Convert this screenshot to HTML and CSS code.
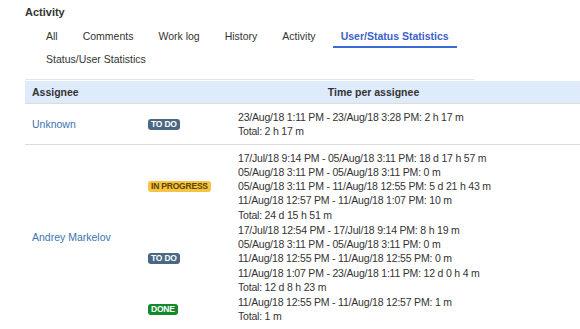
FILE: index.html
```html
<!DOCTYPE html>
<html lang="en">

<head>
    <meta charset="UTF-8">
    <meta name="viewport" content="width=device-width, initial-scale=1.0">
    <title>Activity</title>
    <link rel="stylesheet" href="styles.css">
</head>

<body>
    <section class="activity">
        <h2 class="title">Activity</h2>
        <ul class="tabs">
            <li class="tab">All</li>
            <li class="tab">Comments</li>
            <li class="tab">Work log</li>
            <li class="tab">History</li>
            <li class="tab">Activity</li>
            <li class="tab active">User/Status Statistics</li>
            <li class="tab">Status/User Statistics</li>
        </ul>

        <div class="stats">
            <div class="stats-head">
                <div class="col-assignee">Assignee</div>
                <div class="col-time">Time per assignee</div>
            </div>

            <div class="stats-row">
                <div class="assignee"><a href="#">Unknown</a></div>
                <div class="groups">
                    <div class="group">
                        <div class="status"><span class="lozenge todo">To Do</span></div>
                        <div class="times">
                            <div>23/Aug/18 1:11 PM - 23/Aug/18 3:28 PM: 2 h 17 m</div>
                            <div>Total: 2 h 17 m</div>
                        </div>
                    </div>
                </div>
            </div>

            <div class="stats-row">
                <div class="assignee"><a href="#">Andrey Markelov</a></div>
                <div class="groups">
                    <div class="group">
                        <div class="status"><span class="lozenge progress">In Progress</span></div>
                        <div class="times">
                            <div>17/Jul/18 9:14 PM - 05/Aug/18 3:11 PM: 18 d 17 h 57 m</div>
                            <div>05/Aug/18 3:11 PM - 05/Aug/18 3:11 PM: 0 m</div>
                            <div>05/Aug/18 3:11 PM - 11/Aug/18 12:55 PM: 5 d 21 h 43 m</div>
                            <div>11/Aug/18 12:57 PM - 11/Aug/18 1:07 PM: 10 m</div>
                            <div>Total: 24 d 15 h 51 m</div>
                        </div>
                    </div>
                    <div class="group">
                        <div class="status"><span class="lozenge todo">To Do</span></div>
                        <div class="times">
                            <div>17/Jul/18 12:54 PM - 17/Jul/18 9:14 PM: 8 h 19 m</div>
                            <div>05/Aug/18 3:11 PM - 05/Aug/18 3:11 PM: 0 m</div>
                            <div>11/Aug/18 12:55 PM - 11/Aug/18 12:55 PM: 0 m</div>
                            <div>11/Aug/18 1:07 PM - 23/Aug/18 1:11 PM: 12 d 0 h 4 m</div>
                            <div>Total: 12 d 8 h 23 m</div>
                        </div>
                    </div>
                    <div class="group">
                        <div class="status"><span class="lozenge done">Done</span></div>
                        <div class="times">
                            <div>11/Aug/18 12:55 PM - 11/Aug/18 12:57 PM: 1 m</div>
                            <div>Total: 1 m</div>
                        </div>
                    </div>
                </div>
            </div>
        </div>
    </section>
</body>

</html>
```

FILE: styles.css
```css
* {
    margin: 0;
    padding: 0;
    box-sizing: border-box;
}

body {
    background-color: #fff;
    font-family: "Liberation Sans", Arial, sans-serif;
    font-size: 10.5px;
    color: #333;
    overflow: hidden;
}

.activity {
    padding-left: 25px;
}

.title {
    font-size: 11px;
    font-weight: bold;
    line-height: 14px;
    padding-top: 5px;
}

.tabs {
    list-style: none;
    display: flex;
    flex-wrap: wrap;
    width: 450px;
    margin-top: 6px;
    padding-left: 13px;
    padding-bottom: 8px;
    border-bottom: 1px solid #e6e6e6;
}

.tab {
    padding: 5px 8px 3px;
    margin-right: 9px;
    line-height: 13px;
    border-bottom: 2px solid transparent;
    color: #333;
}

.tab.active {
    font-weight: bold;
    color: #3d5fc6;
    border-bottom-color: #3b6ad6;
}

.stats {
    margin-top: 1px;
    width: 570px;
}

.stats-head {
    display: flex;
    background-color: #deebfb;
    border-bottom: 1px solid #dcdcdc;
    font-weight: bold;
    line-height: 22px;
}

.col-assignee {
    width: 115px;
    padding-left: 7px;
}

.col-time {
    flex: 1;
    text-align: center;
    padding-left: 12px;
}

.stats-row {
    display: flex;
    border-bottom: 1px solid #dcdcdc;
    padding: 6px 0 5px;
}

.assignee {
    width: 115px;
    padding-left: 7px;
    display: flex;
    align-items: center;
}

.assignee a {
    color: #3b73af;
    text-decoration: none;
}

.groups {
    flex: 1;
    display: flex;
    flex-direction: column;
    gap: 1px;
}

.group {
    display: flex;
}

.status {
    width: 90px;
    padding-left: 8px;
    display: flex;
    align-items: center;
}

.times {
    flex: 1;
    padding-left: 8px;
    line-height: 14.25px;
    letter-spacing: -0.2px;
}

.lozenge {
    display: inline-block;
    font-size: 8.5px;
    font-weight: bold;
    text-transform: uppercase;
    line-height: 11px;
    padding: 0 3px;
    border-radius: 3px;
    letter-spacing: -0.2px;
}

.todo {
    background-color: #4a6785;
    color: #fff;
}

.progress {
    background-color: #f6c342;
    color: #594300;
}

.done {
    background-color: #14892c;
    color: #fff;
}
```
